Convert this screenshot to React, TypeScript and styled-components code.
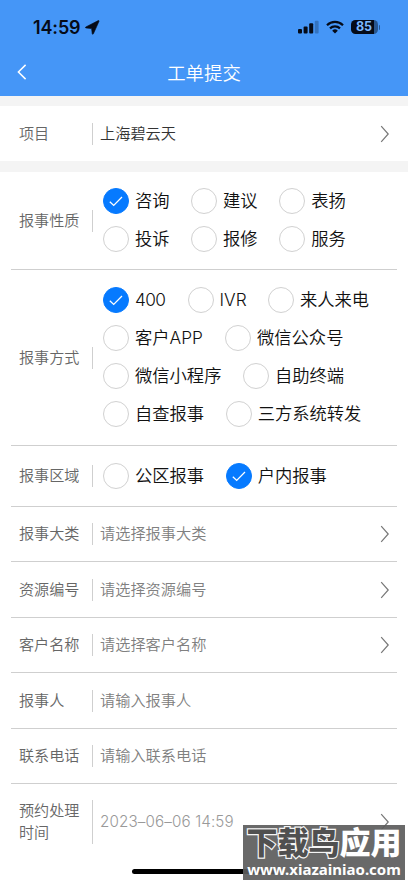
import React from "react";
import styled, { createGlobalStyle } from "styled-components";

const GlobalStyle = createGlobalStyle`
  * { box-sizing: border-box; }
  body {
    margin: 0;
    background: #fff;
    font-family: Inter, "Noto Sans CJK SC", sans-serif;
    overflow: hidden;
  }
`;

const Screen = styled.div`
  position: relative;
  width: 408px;
  height: 883px;
  overflow: hidden;
  background: #fff;
`;

const Header = styled.header`
  height: 96px;
  background: #4596f7;
`;

const StatusBar = styled.div`
  display: flex;
  align-items: center;
  height: 54px;
  padding: 0 28px 0 33px;
  color: #050b18;
`;

const Clock = styled.span`
  width: 52px;
  font-size: 18px;
  font-weight: 600;
  letter-spacing: -0.15px;
  line-height: 20px;
  padding-top: 1px;
  white-space: nowrap;
`;

const StatusIcons = styled.div`
  display: flex;
  align-items: center;
  gap: 7px;
  margin-left: auto;
  svg { display: block; }
`;

const Battery = styled.div`
  display: flex;
  align-items: center;
  gap: 1px;
`;

const BatteryBody = styled.div`
  display: flex;
  align-items: center;
  justify-content: center;
  width: 27px;
  height: 14px;
  border-radius: 4.5px;
  background: linear-gradient(90deg, #050b18 84%, #275690 84%);
  color: #7db8ff;
  font-size: 12.5px;
  font-weight: 700;
  line-height: 14px;
`;

const BatteryTip = styled.div`
  width: 1.5px;
  height: 5px;
  border-radius: 0 2px 2px 0;
  background: #275690;
`;

const NavBar = styled.div`
  display: grid;
  grid-template-columns: 60px 1fr 60px;
  align-items: center;
  height: 36px;
  padding-left: 17px;
  svg { display: block; }
`;

const Title = styled.h1`
  margin: 1px 17px 0 0;
  color: #fff;
  font-size: 18.4px;
  font-weight: 350;
  line-height: 26px;
  text-align: center;
`;

const Band = styled.div<{ $h: number }>`
  height: ${(p) => p.$h}px;
  background: #f4f4f4;
`;

const Form = styled.main`
  padding: 0 11px;
`;

const Row = styled.section<{ $h: number; $line?: boolean }>`
  display: flex;
  align-items: center;
  height: ${(p) => p.$h}px;
  padding: 0 7px 0 8px;
  border-bottom: ${(p) => (p.$line ? "1px solid #cfcfcf" : "none")};
`;

const Label = styled.div<{ $tall?: boolean }>`
  display: flex;
  align-items: center;
  flex: none;
  width: 73.5px;
  height: ${(p) => (p.$tall ? 44 : 22)}px;
  padding-right: 11.5px;
  border-right: 1px solid #cfcfcf;
  color: #666;
  font-size: 15.1px;
  font-weight: 350;
  line-height: 22px;
`;

const Value = styled.div<{ $color: string; $spacing?: number }>`
  flex: 1;
  padding-left: 7.5px;
  color: ${(p) => p.$color};
  font-size: 15.2px;
  font-weight: 350;
  letter-spacing: ${(p) => p.$spacing ?? 0}px;
  line-height: 22px;
  white-space: nowrap;
`;

const Options = styled.div`
  display: flex;
  flex-direction: column;
  gap: 12px;
  padding: 0 0 1px 10.5px;
`;

const OptionLine = styled.div`
  display: flex;
  gap: 21.5px;
`;

const Option = styled.label`
  display: flex;
  align-items: center;
  gap: 6px;
  height: 26px;
`;

const Circle = styled.span<{ $on?: boolean }>`
  display: flex;
  align-items: center;
  justify-content: center;
  flex: none;
  width: 26px;
  height: 26px;
  border: 1px solid ${(p) => (p.$on ? "#067aff" : "#d1d1d1")};
  border-radius: 50%;
  background: ${(p) => (p.$on ? "#067aff" : "#fff")};
`;

const OptionText = styled.span<{ $w?: number; $tight?: boolean }>`
  width: ${(p) => (p.$w ? `${p.$w}px` : "auto")};
  color: #111;
  font-size: 17.3px;
  font-weight: 350;
  letter-spacing: ${(p) => (p.$tight ? "-0.6px" : "0")};
  line-height: 26px;
  white-space: nowrap;
`;

const HomeBar = styled.div`
  position: absolute;
  left: 132px;
  top: 869px;
  width: 145px;
  height: 5px;
  border-radius: 3px;
  background: #000;
`;

const Watermark = styled.div`
  position: absolute;
  left: 243px;
  top: 825px;
  width: 162px;
  height: 55px;
  padding-top: 1px;
  background: rgba(92, 92, 92, 0.92);
  color: #fff;
  white-space: nowrap;
  text-align: center;
`;

const WatermarkName = styled.div`
  height: 34px;
  font-size: 31px;
  font-weight: 900;
  line-height: 34px;
`;

const Outlined = styled.span`
  color: #505050;
  -webkit-text-stroke: 2.4px #f4f4f4;
  paint-order: stroke fill;
`;

const WatermarkUrl = styled.div`
  font-family: "Noto Sans", sans-serif;
  font-size: 15px;
  font-weight: 700;
  line-height: 18px;
`;

const Chevron = () => (
  <svg width="10" height="18" viewBox="0 0 10 18" fill="none">
    <path d="M1.2 1.2 8.2 9 1.2 16.8" stroke="#777" strokeWidth="1.2" />
  </svg>
);

const Tick = () => (
  <svg width="14" height="12" viewBox="0 0 14 12" fill="none">
    <path d="M.8 6.8 4.7 10.4 13 2" stroke="#fff" strokeWidth="1.3" />
  </svg>
);

type Choice = { text: string; on?: boolean; w?: number; tight?: boolean };

const ChoiceRow = ({ h, label, lines }: { h: number; label: string; lines: Choice[][] }) => (
  <Row $h={h} $line>
    <Label>{label}</Label>
    <Options>
      {lines.map((line, i) => (
        <OptionLine key={i}>
          {line.map((o) => (
            <Option key={o.text}>
              <Circle $on={o.on}>{o.on && <Tick />}</Circle>
              <OptionText $w={o.w} $tight={o.tight}>{o.text}</OptionText>
            </Option>
          ))}
        </OptionLine>
      ))}
    </Options>
  </Row>
);

const nature: Choice[][] = [
  [{ text: "咨询", on: true }, { text: "建议" }, { text: "表扬" }],
  [{ text: "投诉" }, { text: "报修" }, { text: "服务" }],
];

const channel: Choice[][] = [
  [{ text: "400", on: true, w: 31, tight: true }, { text: "IVR", w: 27 }, { text: "来人来电" }],
  [{ text: "客户APP", w: 68.5 }, { text: "微信公众号" }],
  [{ text: "微信小程序" }, { text: "自助终端" }],
  [{ text: "自查报事" }, { text: "三方系统转发" }],
];

const area: Choice[][] = [[{ text: "公区报事" }, { text: "户内报事", on: true }]];

const fields = [
  { label: "报事大类", hint: "请选择报事大类", link: true, h: 55 },
  { label: "资源编号", hint: "请选择资源编号", link: true, h: 56 },
  { label: "客户名称", hint: "请选择客户名称", link: true, h: 55 },
  { label: "报事人", hint: "请输入报事人", link: false, h: 56 },
  { label: "联系电话", hint: "请输入联系电话", link: false, h: 55 },
];

export default function App() {
  return (
    <Screen>
      <GlobalStyle />
      <Header>
        <StatusBar>
          <Clock>14:59</Clock>
          <svg width="15" height="15" viewBox="0 0 15 15">
            <path d="M13.3.6.9 6.9c-.7.4-.5 1.1.2 1.1l5.5.6.6 5c.1.8.9.9 1.2.2L14 1.3c.2-.6-.2-.9-.7-.7Z" fill="#050b18" stroke="#050b18" strokeWidth=".6" />
          </svg>
          <StatusIcons>
            <svg width="21" height="14" viewBox="0 0 21 14" fill="#050b18">
              <rect x="0" y="9" width="4" height="4.6" rx="1" />
              <rect x="5.6" y="6.5" width="4" height="7.1" rx="1" />
              <rect x="11.2" y="3.3" width="4" height="10.3" rx="1" />
              <rect x="16.8" y="0.8" width="3.8" height="12.8" rx="1" opacity=".25" />
            </svg>
            <svg width="18" height="14" viewBox="0 0 18 14" fill="none" stroke="#050b18" strokeWidth="2.2">
              <path d="M1 5.2a11.4 11.4 0 0 1 16 0" />
              <path d="M4 8.4a7.2 7.2 0 0 1 10 0" />
              <path d="M9 13.6 6.2 10.7a4 4 0 0 1 5.6 0Z" fill="#050b18" stroke="none" />
            </svg>
            <Battery>
              <BatteryBody>85</BatteryBody>
              <BatteryTip />
            </Battery>
          </StatusIcons>
        </StatusBar>
        <NavBar>
          <svg width="10" height="16" viewBox="0 0 10 16" fill="none">
            <path d="M8.6.9 1.4 8l7.2 7.1" stroke="#fff" strokeWidth="1.5" />
          </svg>
          <Title>工单提交</Title>
        </NavBar>
      </Header>
      <Band $h={10} />
      <Form>
        <Row $h={55}>
          <Label>项目</Label>
          <Value $color="#333">上海碧云天</Value>
          <Chevron />
        </Row>
      </Form>
      <Band $h={11} />
      <Form>
        <ChoiceRow h={98} label="报事性质" lines={nature} />
        <ChoiceRow h={176} label="报事方式" lines={channel} />
        <ChoiceRow h={61} label="报事区域" lines={area} />
        {fields.map((f) => (
          <Row key={f.label} $h={f.h} $line>
            <Label>{f.label}</Label>
            <Value $color="#808080">{f.hint}</Value>
            {f.link && <Chevron />}
          </Row>
        ))}
        <Row $h={76}>
          <Label $tall>预约处理时间</Label>
          <Value $color="#999" $spacing={0.13}>2023–06–06 14:59</Value>
          <Chevron />
        </Row>
      </Form>
      <HomeBar />
      <Watermark>
        <WatermarkName>
          <Outlined>下载鸟</Outlined>应用
        </WatermarkName>
        <WatermarkUrl>www.xiazainiao.com</WatermarkUrl>
      </Watermark>
    </Screen>
  );
}
